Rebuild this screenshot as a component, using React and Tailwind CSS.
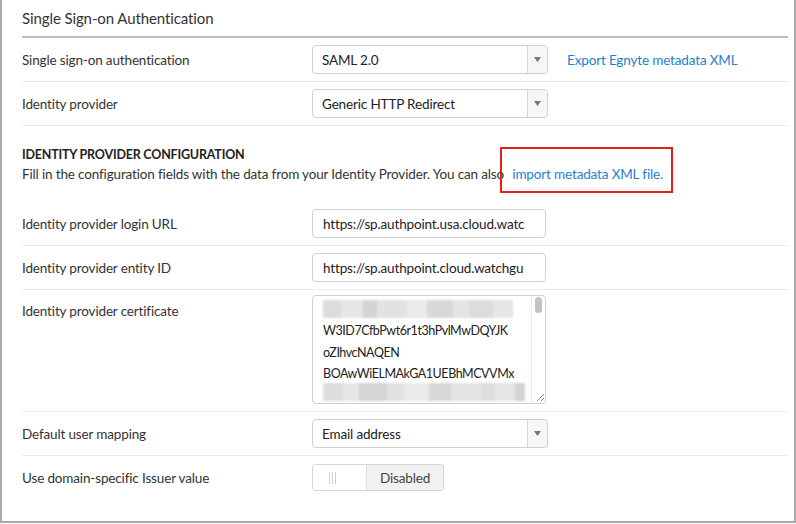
import React from 'react';

const font = { fontFamily: '"Source Sans Pro", Lato, "Open Sans", sans-serif' };

function Caret() {
  return (
    <div className="w-[20px] h-full border-l border-[#d6d6d6] bg-[#f6f6f6] rounded-r-[4px] flex items-center justify-center">
      <svg width="7" height="5" viewBox="0 0 7 5">
        <path d="M0 0 L7 0 L3.5 5 Z" fill="#777" />
      </svg>
    </div>
  );
}

function Select({ value }) {
  return (
    <div className="w-[236px] h-[29px] border border-[#cfcfcf] rounded-[4px] bg-white flex items-center">
      <div className="flex-1 pl-[9px] pt-px text-[13.5px] tracking-[-0.15px] text-[#222]">{value}</div>
      <Caret />
    </div>
  );
}

function TextInput({ value }) {
  return (
    <div className="w-[234px] h-[29px] border border-[#cfcfcf] rounded-[4px] bg-white flex items-center overflow-hidden">
      <div className="pl-[10px] pt-px text-[13.5px] tracking-[-0.15px] text-[#222] whitespace-nowrap">{value}</div>
    </div>
  );
}

function Row({ label, children, tall, last }) {
  return (
    <div
      className={
        'flex ' +
        (tall ? 'items-start pt-[5px] pb-[7px] ' : last ? 'items-center h-[43px] ' : 'items-center h-[44px] ') +
        (last ? '' : 'border-b border-[#ececec]')
      }
    >
      <div className={'w-[290px] text-[13.5px] tracking-[-0.15px] text-[#333] ' + (tall ? 'pt-[6px]' : 'pt-px')}>
        {label}
      </div>
      {children}
    </div>
  );
}

function Blur({ widths }) {
  const shades = ['#dcdcdc', '#e6e6e6', '#d4d4d4', '#e2e2e2', '#ebebeb', '#d8d8d8', '#e4e4e4'];
  return (
    <div className="flex h-[18px] blur-[1px]">
      {widths.map((w, i) => (
        <div key={i} className="h-full" style={{ width: w, background: shades[i % shades.length] }} />
      ))}
    </div>
  );
}

function CertBox() {
  return (
    <div className="w-[234px] h-[109px] border border-[#cfcfcf] rounded-[4px] bg-white flex overflow-hidden">
      <div className="flex-1 pl-[10px] pt-[3px] text-[12.5px] tracking-[-0.45px] leading-[21.5px] text-[#222]">
        <div className="pt-[1px] pb-[2px]">
          <Blur widths={[18, 22, 14, 30, 20, 26, 16, 24, 20]} />
        </div>
        <div>W3ID7CfbPwt6r1t3hPvlMwDQYJK</div>
        <div>oZIhvcNAQEN</div>
        <div className="h-[18px] overflow-hidden">BOAwWiELMAkGA1UEBhMCVVMx</div>
        <div className="pt-[2px]">
          <Blur widths={[20, 16, 28, 18, 24, 22, 30, 14, 20, 10]} />
        </div>
      </div>
      <div className="w-[14px] border-l border-[#ececec] flex flex-col items-center justify-between py-[1px]">
        <div className="w-[7px] h-[16px] rounded-full bg-[#c2c2c2]" />
        <svg width="12" height="12" viewBox="0 0 12 12">
          <path d="M4 11 L11 4 M8 11 L11 8" stroke="#888" strokeWidth="1" />
        </svg>
      </div>
    </div>
  );
}

function Toggle() {
  return (
    <div className="w-[132px] h-[27px] border border-[#d6d6d6] rounded-[3px] flex overflow-hidden">
      <div className="w-[53px] bg-white flex items-center pl-[16px] gap-[2px]">
        <div className="w-px h-[12px] bg-[#cfcfcf]" />
        <div className="w-px h-[12px] bg-[#cfcfcf]" />
        <div className="w-px h-[12px] bg-[#cfcfcf]" />
      </div>
      <div className="flex-1 bg-[#f1f1f1] border-l border-[#e2e2e2] flex items-center justify-center pt-px text-[13.5px] tracking-[-0.15px] text-[#444]">
        Disabled
      </div>
    </div>
  );
}

export default function App() {
  return (
    <div className="w-[796px] h-[524px] bg-white" style={font}>
      <div className="w-[796px] h-[523px] border-l-2 border-r-2 border-b-2 border-[#a9a9a9] pl-[20px] pr-[6px]">
        <div className="pt-[6px] h-[38px] border-b-2 border-[#bdbdbd] text-[15px] tracking-[-0.1px] leading-[24px] text-[#333]">
          Single Sign-on Authentication
        </div>

        <Row label="Single sign-on authentication">
          <Select value="SAML 2.0" />
          <a className="ml-[19px] pt-px text-[13.5px] tracking-[-0.15px] text-[#1f7ecf]">Export Egnyte metadata XML</a>
        </Row>
        <Row label="Identity provider">
          <Select value="Generic HTTP Redirect" />
        </Row>

        <div className="relative pt-[20px] pb-[18px]">
          <div className="text-[12.5px] font-bold leading-[18px] text-[#222] tracking-[-0.2px]">
            IDENTITY PROVIDER CONFIGURATION
          </div>
          <div className="text-[13.5px] tracking-[-0.15px] leading-[20px] text-[#333]">
            Fill in the configuration fields with the data from your Identity Provider. You can also{' '}
            <a className="ml-[5px] text-[#1f7ecf]">import metadata XML file.</a>
          </div>
          <div className="absolute left-[478px] top-[21px] w-[173px] h-[46px] border-2 border-[#e3201b]" />
        </div>

        <Row label="Identity provider login URL">
          <TextInput value="https://sp.authpoint.usa.cloud.watc" />
        </Row>
        <Row label="Identity provider entity ID">
          <TextInput value="https://sp.authpoint.cloud.watchgu" />
        </Row>
        <Row label="Identity provider certificate" tall>
          <CertBox />
        </Row>
        <Row label="Default user mapping">
          <Select value="Email address" />
        </Row>
        <Row label="Use domain-specific Issuer value" last>
          <Toggle />
        </Row>
      </div>
    </div>
  );
}
